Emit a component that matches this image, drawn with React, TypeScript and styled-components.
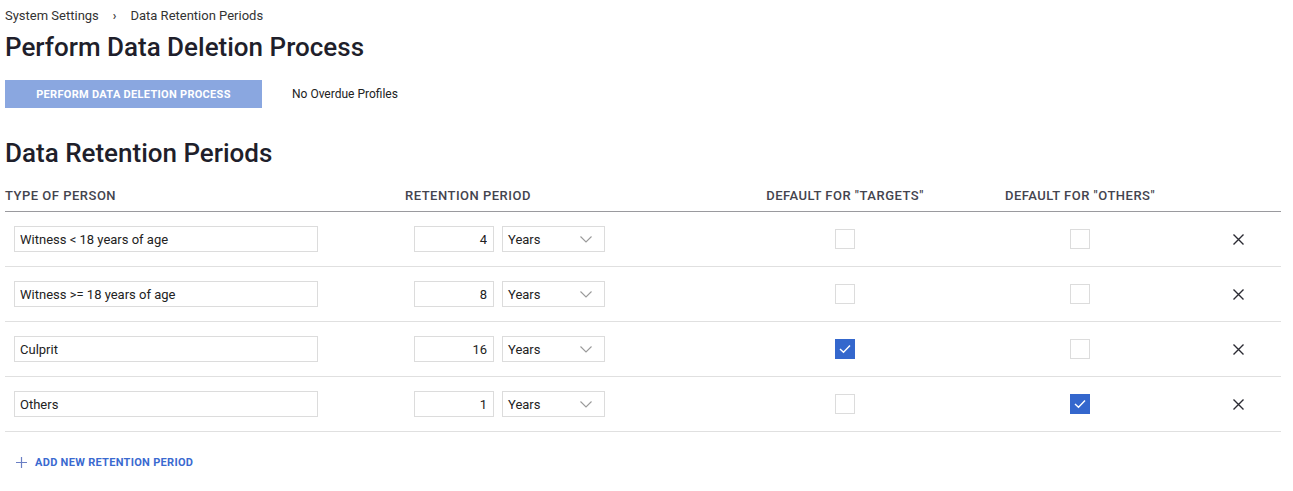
import React, { useState } from 'react';
import styled, { createGlobalStyle } from 'styled-components';

const GlobalStyle = createGlobalStyle`
  html, body {
    margin: 0;
    padding: 0;
    background: #fff;
  }
  body {
    font-family: Roboto, "Liberation Sans", Arial, sans-serif;
    color: #212121;
  }
  * {
    box-sizing: border-box;
  }
`;

const Page = styled.div`
  padding: 7px 12px 20px 5px;
`;

const Breadcrumb = styled.nav`
  display: flex;
  align-items: center;
  gap: 14px;
  font-size: 13px;
  line-height: 18px;
  color: #333;
`;

const Crumb = styled.span``;

const Separator = styled.span`
  font-size: 12px;
  font-weight: 700;
  color: #444;
`;

const Title = styled.h1`
  margin: 6px 0 0;
  font-size: 26px;
  line-height: 32px;
  font-weight: 500;
  color: #1f1f2b;
`;

const ActionRow = styled.div`
  display: flex;
  align-items: center;
  gap: 30px;
  margin-top: 17px;
`;

const PrimaryButton = styled.button`
  width: 257px;
  height: 28px;
  border: 0;
  background: #8aa7e0;
  color: #fff;
  font-family: inherit;
  font-size: 11px;
  font-weight: 700;
  letter-spacing: 0.3px;
  text-transform: uppercase;
  cursor: default;
`;

const Note = styled.span`
  font-size: 12px;
  color: #222;
`;

const SectionTitle = styled.h2`
  margin: 29px 0 0;
  font-size: 26px;
  line-height: 32px;
  font-weight: 500;
  color: #1f1f2b;
`;

const Table = styled.div`
  margin-top: 19px;
`;

const Grid = styled.div<{ $header?: boolean }>`
  display: grid;
  grid-template-columns: 400px 320px 240px 230px 86px;
  height: ${p => (p.$header ? '24px' : '55px')};
  border-bottom: 1px solid ${p => (p.$header ? '#9a9a9e' : '#e0e0e0')};
  align-items: ${p => (p.$header ? 'start' : 'center')};
`;

const HeadCell = styled.div<{ $center?: boolean }>`
  font-size: 13px;
  font-weight: 500;
  letter-spacing: 0.5px;
  color: #44444e;
  text-transform: uppercase;
  text-align: ${p => (p.$center ? 'center' : 'left')};
  line-height: 15px;
`;

const Cell = styled.div<{ $center?: boolean }>`
  display: flex;
  align-items: center;
  gap: 8px;
  padding-left: ${p => (p.$center ? '0' : '9px')};
  justify-content: ${p => (p.$center ? 'center' : 'flex-start')};
`;

const TextInput = styled.input<{ $width: number; $right?: boolean }>`
  width: ${p => p.$width}px;
  height: 26px;
  border: 1px solid #dcdcdc;
  padding: 0 6px 0 5px;
  font-family: inherit;
  font-size: 13px;
  color: #222;
  text-align: ${p => (p.$right ? 'right' : 'left')};
  outline: none;
`;

const SelectBox = styled.div`
  width: 103px;
  height: 26px;
  border: 1px solid #dcdcdc;
  display: flex;
  align-items: center;
  justify-content: space-between;
  padding: 0 12px 0 5px;
  font-size: 13px;
  color: #222;
`;

const Check = styled.span<{ $on: boolean }>`
  width: 20px;
  height: 20px;
  display: inline-flex;
  align-items: center;
  justify-content: center;
  border: 1px solid ${p => (p.$on ? '#3467cd' : '#dcdcdc')};
  background: ${p => (p.$on ? '#3467cd' : '#fff')};
`;

const RemoveButton = styled.button`
  border: 0;
  background: none;
  padding: 0;
  display: inline-flex;
  cursor: pointer;
`;

const AddLink = styled.button`
  margin: 24px 0 0 11px;
  border: 0;
  background: none;
  padding: 0;
  display: flex;
  align-items: center;
  gap: 8px;
  font-family: inherit;
  font-size: 11px;
  font-weight: 700;
  letter-spacing: 0.3px;
  color: #3a6ad0;
  text-transform: uppercase;
  cursor: pointer;
`;

const Chevron = () => (
  <svg width="12" height="7" viewBox="0 0 12 7" fill="none">
    <path d="M0.5 0.5 L6 6 L11.5 0.5" stroke="#9a9a9a" strokeWidth="1.1" />
  </svg>
);

const Tick = () => (
  <svg width="12" height="10" viewBox="0 0 12 10" fill="none">
    <path d="M1 5 L4.5 8.3 L11 1.5" stroke="#fff" strokeWidth="1.4" />
  </svg>
);

const Cross = () => (
  <svg width="11" height="11" viewBox="0 0 11 11" fill="none">
    <path d="M0.5 0.5 L10.5 10.5 M10.5 0.5 L0.5 10.5" stroke="#2b2b33" strokeWidth="1.4" />
  </svg>
);

const Plus = () => (
  <svg width="11" height="11" viewBox="0 0 11 11" fill="none">
    <path d="M5.5 0 V11 M0 5.5 H11" stroke="#6a7fc4" strokeWidth="1.2" />
  </svg>
);

interface Period {
  name: string;
  amount: number;
  targets: boolean;
  others: boolean;
}

const App = () => {
  const [periods] = useState<Period[]>([
    { name: 'Witness < 18 years of age', amount: 4, targets: false, others: false },
    { name: 'Witness >= 18 years of age', amount: 8, targets: false, others: false },
    { name: 'Culprit', amount: 16, targets: true, others: false },
    { name: 'Others', amount: 1, targets: false, others: true },
  ]);

  return (
    <>
      <GlobalStyle />
      <Page>
        <Breadcrumb>
          <Crumb>System Settings</Crumb>
          <Separator>›</Separator>
          <Crumb>Data Retention Periods</Crumb>
        </Breadcrumb>
        <Title>Perform Data Deletion Process</Title>
        <ActionRow>
          <PrimaryButton>Perform Data Deletion Process</PrimaryButton>
          <Note>No Overdue Profiles</Note>
        </ActionRow>

        <SectionTitle>Data Retention Periods</SectionTitle>
        <Table>
          <Grid $header>
            <HeadCell>Type of Person</HeadCell>
            <HeadCell>Retention Period</HeadCell>
            <HeadCell $center>Default for "Targets"</HeadCell>
            <HeadCell $center>Default for "Others"</HeadCell>
            <HeadCell />
          </Grid>
          {periods.map(p => (
            <Grid key={p.name}>
              <Cell>
                <TextInput $width={304} defaultValue={p.name} />
              </Cell>
              <Cell>
                <TextInput $width={80} $right defaultValue={String(p.amount)} />
                <SelectBox>
                  <span>Years</span>
                  <Chevron />
                </SelectBox>
              </Cell>
              <Cell $center>
                <Check $on={p.targets}>{p.targets && <Tick />}</Check>
              </Cell>
              <Cell $center>
                <Check $on={p.others}>{p.others && <Tick />}</Check>
              </Cell>
              <Cell $center>
                <RemoveButton aria-label="Remove">
                  <Cross />
                </RemoveButton>
              </Cell>
            </Grid>
          ))}
        </Table>
        <AddLink>
          <Plus />
          Add new retention period
        </AddLink>
      </Page>
    </>
  );
};

export default App;
